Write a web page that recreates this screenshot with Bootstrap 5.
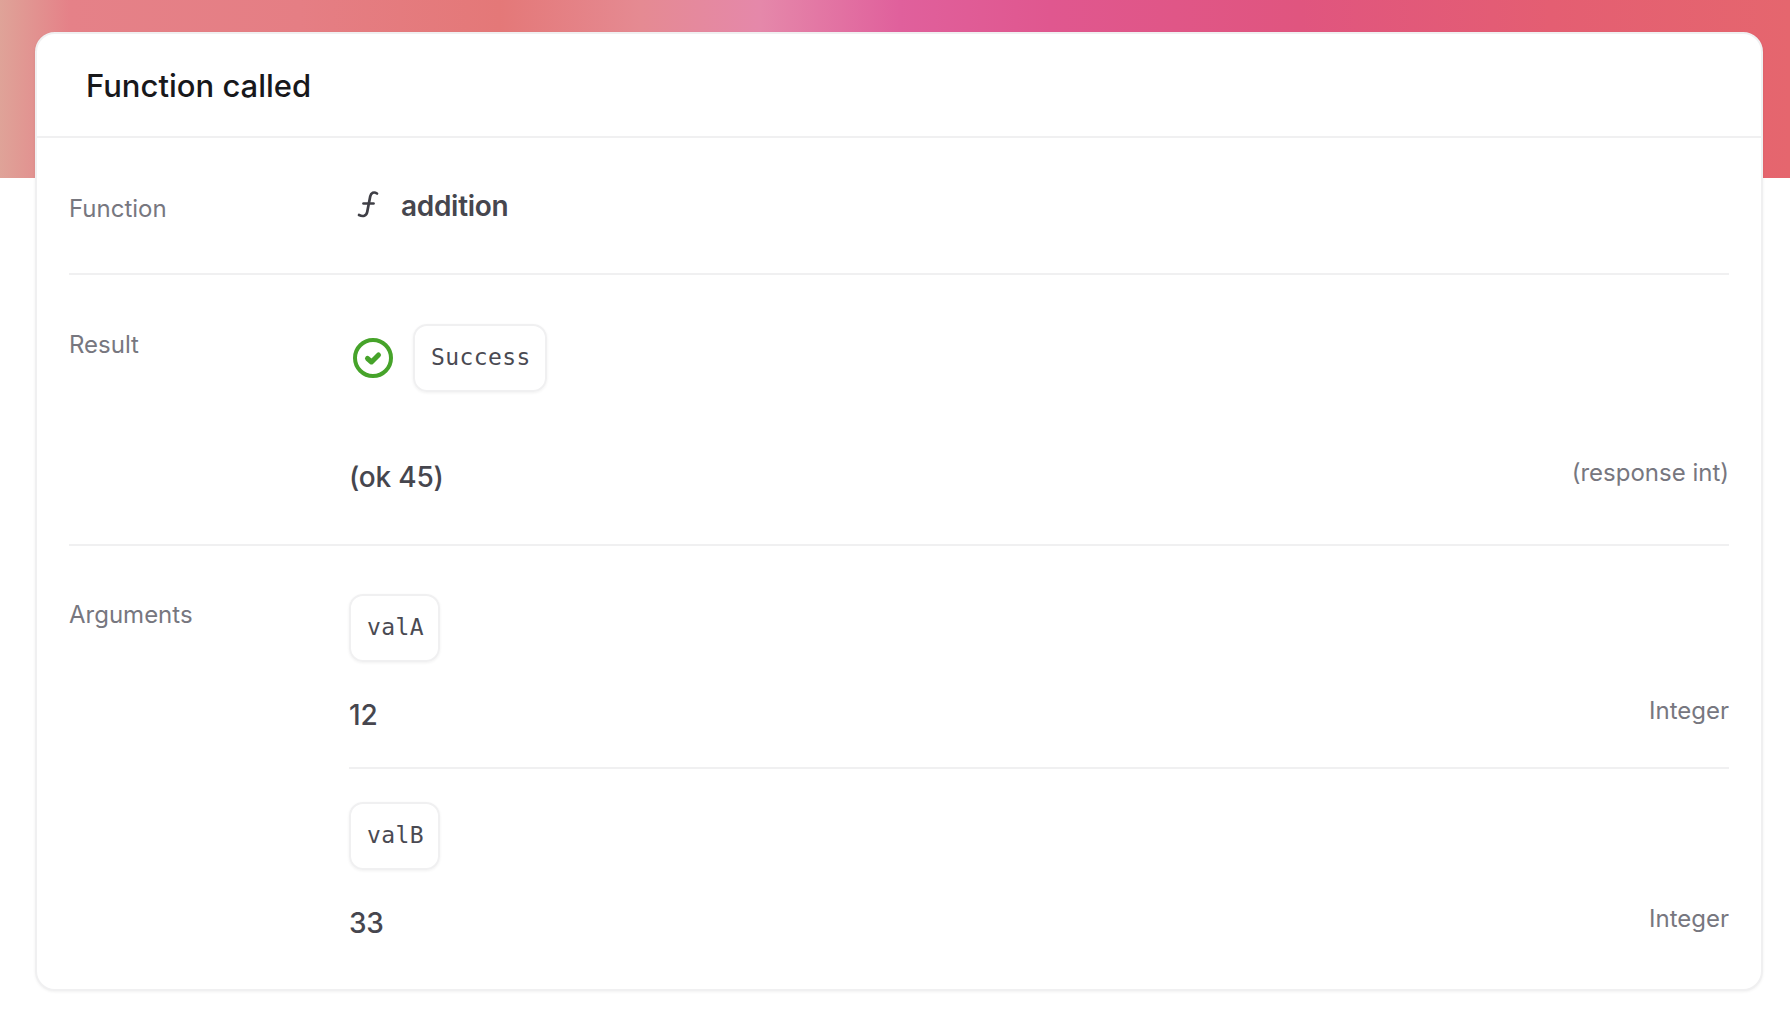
<!DOCTYPE html>
<html lang="en">
<head>
    <meta charset="UTF-8">
    <meta name="viewport" content="width=device-width, initial-scale=1.0">
    <link href="https://cdn.jsdelivr.net/npm/bootstrap@5.3.3/dist/css/bootstrap.min.css" rel="stylesheet">
    <title>Function called</title>
    <style>
        body { font-family: Inter, "Liberation Sans", sans-serif; color: #3f3f46; background: #fff; }
        .top-band { height: 178px; background: linear-gradient(90deg, #dfa398 0, #e58188 70px, #e57e84 300px, #e47878 500px, #e58a92 640px, #e588aa 760px, #e0609c 900px, #e0578f 1050px, #e0557f 1300px, #e45e72 1550px, #e5666e 1790px); }
        .page-wrap { margin-top: -146px; padding: 0 27px 28px 35px; }
        .call-card { border: 2px solid #f0f0f1; border-radius: 20px; box-shadow: 0 1px 3px rgba(0,0,0,.06); }
        .call-head { height: 104px; padding-left: 49px; border-bottom: 2px solid #f0f0f1; font-size: 31px; font-weight: 500; color: #18181b; line-height: 103px; }
        .call-body { padding: 0 32px; }
        .call-row { padding: 49px 0; border-bottom: 2px solid #f0f0f1; }
        .call-row:first-child { padding-top: 50px; }
        .call-row:last-child { border-bottom: 0; padding-top: 48px; padding-bottom: 48px; }
        .row-label { width: 280px; height: 36px; flex: none; padding-top: 3px; font-size: 24px; line-height: 36px; color: #77777f; }
        .fn-icon { width: 24px; height: 30px; margin: 1px 21px 0 7px; }
        .fn-name { font-size: 28px; font-weight: 600; line-height: 36px; letter-spacing: -.3px; color: #46464e; }
        .code-pill { display: block; width: fit-content; height: 68px; padding: 0 14px 0 16px; border: 2px solid #f0f0f1; border-radius: 14px; box-shadow: 0 1px 3px rgba(0,0,0,.06); font-family: "DejaVu Sans Mono", "Liberation Mono", monospace; font-size: 23px; line-height: 63px; letter-spacing: .4px; color: #4a4a52; }
        .status-icon { width: 40px; height: 40px; margin: 0 20px 0 4px; }
        .value-text { font-size: 28px; font-weight: 500; line-height: 36px; letter-spacing: -.2px; color: #46464e; }
        .type-text { font-size: 24px; line-height: 36px; color: #77777f; margin-top: -4px; }
        .result-line { margin-top: 67px; }
        .arg-line { margin-top: 35px; }
        .arg-sep { border-top: 2px solid #f0f0f1; margin: 34px 0 33px; }
    </style>
</head>
<body>
    <div class="top-band"></div>
    <div class="page-wrap">
        <div class="card call-card">
            <div class="call-head">Function called</div>
            <div class="call-body">
                <div class="call-row d-flex">
                    <div class="row-label">Function</div>
                    <div class="d-flex align-items-start">
                        <svg class="fn-icon" viewBox="0 0 24 30" fill="none" stroke="#3f3f46" stroke-width="2.7" stroke-linecap="round">
                            <path d="M21 4.5C18 2.5 15 3.5 14.2 7.5L11.2 23C10.4 27 7 28 3 26"/>
                            <path d="M7.5 14.5H17.5"/>
                        </svg>
                        <span class="fn-name">addition</span>
                    </div>
                </div>
                <div class="call-row d-flex">
                    <div class="row-label">Result</div>
                    <div class="flex-grow-1">
                        <div class="d-flex align-items-center">
                            <svg class="status-icon" viewBox="0 0 40 40" fill="none" stroke="#46a32a" stroke-linecap="round" stroke-linejoin="round">
                                <circle cx="20" cy="20" r="18" stroke-width="4"/>
                                <path d="M14.5 20.5l4 3.5 7-7" stroke-width="5"/>
                            </svg>
                            <span class="code-pill">Success</span>
                        </div>
                        <div class="result-line d-flex justify-content-between">
                            <span class="value-text">(ok 45)</span>
                            <span class="type-text">(response int)</span>
                        </div>
                    </div>
                </div>
                <div class="call-row d-flex">
                    <div class="row-label">Arguments</div>
                    <div class="flex-grow-1">
                        <span class="code-pill">valA</span>
                        <div class="arg-line d-flex justify-content-between">
                            <span class="value-text">12</span>
                            <span class="type-text">Integer</span>
                        </div>
                        <div class="arg-sep"></div>
                        <span class="code-pill">valB</span>
                        <div class="arg-line d-flex justify-content-between">
                            <span class="value-text">33</span>
                            <span class="type-text">Integer</span>
                        </div>
                    </div>
                </div>
            </div>
        </div>
    </div>
    <script src="https://cdn.jsdelivr.net/npm/bootstrap@5.3.3/dist/js/bootstrap.bundle.min.js"></script>
</body>
</html>
